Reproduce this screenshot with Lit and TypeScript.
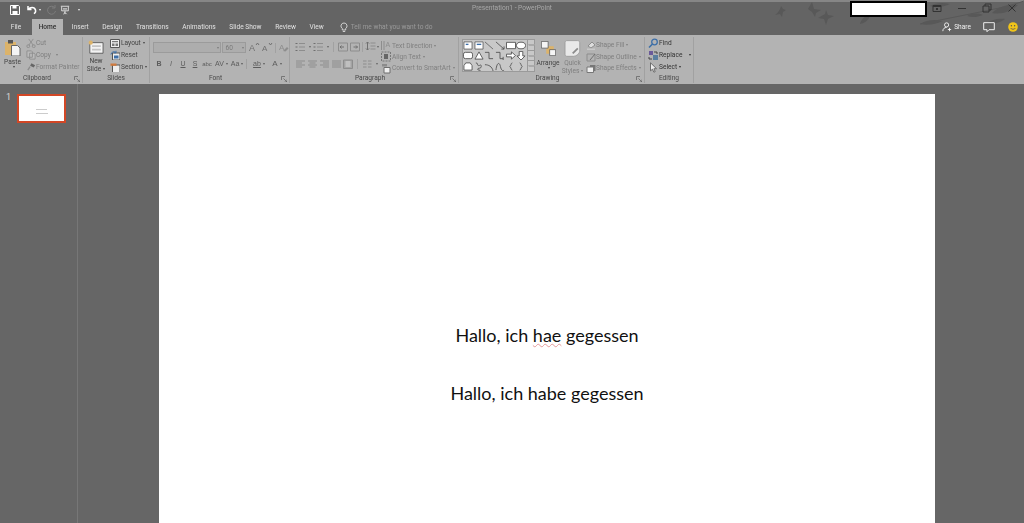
import { LitElement, html, css, svg } from 'lit';
import { customElement } from 'lit/decorators.js';

const MID = '#6f6f6f';
const PALE = '#8d8d8d';
const GOLD = '#dcb36a';
const BLUE = '#3d6fa8';

const icons: Record<string, unknown> = {
  save: svg`<path d="M1.5 1.5h8l1 1v8h-9z" fill="none" stroke="#fff"/><path d="M3.5 1.5h4v3h-4zM3.5 7h5v3.5h-5z" fill="#fff"/>`,
  undo: svg`<path d="M2 2v3.5h3.5M2.5 5.5C4 3 8.5 2.8 9.5 6c.4 1.6-.4 3-1.6 3.6" fill="none" stroke="#fff" stroke-width="1.5"/>`,
  redo: svg`<path d="M8.5 3.5a4 4 0 1 0 1 3.5M9 1v3H6" fill="none" stroke="#7d7d7d"/>`,
  present: svg`<path d="M1 1.5h10M2 2v5h8V2M6 7v4M4 11l2-2 2 2" fill="none" stroke="#eee"/><path d="M3.5 4h5v1.4h-5z" fill="#ddd"/>`,
  paste: svg`<path d="M1 3h11v13H1z" fill="${GOLD}"/><path d="M4 1h5v3.5H4z" fill="#555"/><path d="M7.5 6.5h6l2.5 2.5v8H7.5z" fill="#f4f4f4" stroke="#666"/>`,
  cut: svg`<path d="M3 1l5 7M8 1L3 8" stroke="${PALE}" fill="none"/><circle cx="2.5" cy="9" r="1.6" fill="none" stroke="${PALE}"/><circle cx="8.5" cy="9" r="1.6" fill="none" stroke="${PALE}"/>`,
  copy: svg`<path d="M1 1h5l1 1v6H1zM4 3.5h5l1 1V10H4z" fill="#bbb" stroke="${PALE}"/>`,
  painter: svg`<path d="M6 1.5l4 2-1.5 2.5-4-2z" fill="#666"/><path d="M4.5 5L2 9" stroke="${PALE}" stroke-width="1.5"/>`,
  newslide: svg`<path d="M2 3h15v12H2z" fill="#f3f3f3" stroke="#555"/><path d="M4.5 6h10v2h-10zM4.5 10h10v2h-10z" fill="#c4c4c4"/><circle cx="3" cy="3" r="2.4" fill="${GOLD}"/>`,
  layout: svg`<path d="M.5 1.5h9v8h-9z" fill="#eee" stroke="#555"/><path d="M2 3h6v1.3H2zM2 5.5h2.5V8H2zM5.5 5.5H8V8H5.5z" fill="#777"/>`,
  reset: svg`<path d="M2.5 3h7.5v7H2.5z" fill="#eee" stroke="#555"/><path d="M1 4.5a3 3 0 0 1 5-2M6 .8v2H4" fill="none" stroke="${BLUE}"/><path d="M4 5.5h4.5v3H4z" fill="${BLUE}"/>`,
  section: svg`<path d="M2.5 3h7.5v7.5H2.5z" fill="#eee" stroke="#555"/><path d="M.5 1.5h6v2.3h-6z" fill="#d07a3e"/>`,
  grow: svg`<text x="0" y="9" font-size="9" fill="${MID}" font-family="Liberation Sans">A</text><path d="M7 3l1.5-2L10 3" fill="none" stroke="${MID}"/>`,
  shrink: svg`<text x="0" y="9" font-size="8" fill="${MID}" font-family="Liberation Sans">A</text><path d="M7 1l1.5 2L10 1" fill="none" stroke="${MID}"/>`,
  clear: svg`<text x="1" y="8" font-size="8" fill="${PALE}" font-family="Liberation Sans">A</text><path d="M5 9l4-4 1.5 1.5-3 3z" fill="${PALE}"/>`,
  bullets: svg`<path d="M.5 1.500h2M.5 5h2M.5 8.500h2" stroke="${MID}"/><path d="M4 1.500h6M4 5h6M4 8.500h6" stroke="${PALE}"/>`,
  indentL: svg`<path d="M.5 1h9v8h-9z" fill="none" stroke="${PALE}"/><path d="M2 5h4M2 5l1.500-1.500M2 5l1.500 1.500" stroke="${MID}" fill="none"/>`,
  indentR: svg`<path d="M.5 1h9v8h-9z" fill="none" stroke="${PALE}"/><path d="M7.500 5h-4M7.500 5L6 3.500M7.500 5L6 6.500" stroke="${MID}" fill="none"/>`,
  spacing: svg`<path d="M2.500 1v8M1 2.500l1.500-1.500L4 2.500M1 7.500L2.500 9 4 7.500" stroke="${MID}" fill="none"/><path d="M5.500 2h5M5.500 5h5M5.500 8h5" stroke="${PALE}"/>`,
  align: svg`<path d="M1 2h9M1 4h6M1 6h9M1 8h6" stroke="${PALE}"/>`,
  alignC: svg`<path d="M1 2h9M2.500 4h6M1 6h9M2.500 8h6" stroke="${PALE}"/>`,
  alignR: svg`<path d="M1 2h9M4 4h6M1 6h9M4 8h6" stroke="${PALE}"/>`,
  justify: svg`<path d="M1 2h9M1 4h9M1 6h9M1 8h9" stroke="${PALE}"/>`,
  distrib: svg`<path d="M.5 1h9v8.500h-9z" fill="#a3a3a3" stroke="${PALE}"/><path d="M2.500 3h5M2.500 5h5M2.500 7h5" stroke="#ddd"/>`,
  cols: svg`<path d="M1 2h3.500M1 5h3.500M1 8h3.500M6 2h3.500M6 5h3.500M6 8h3.500" stroke="${PALE}"/>`,
  textdir: svg`<path d="M.5 1v9M3 1v9" stroke="${PALE}"/><text x="4.500" y="7" font-size="7" fill="${PALE}" font-family="Liberation Sans">A</text>`,
  aligntext: svg`<path d="M.5 1h9v9h-9z" fill="none" stroke="#777" stroke-dasharray="2 1"/><path d="M3 3h4v5H3z" fill="#666"/>`,
  smartart: svg`<path d="M1 1h5v2.500H1z" fill="#8c8c8c"/><path d="M3 4.500h6v5.500H3z" fill="#eee" stroke="${MID}"/>`,
  arrange: svg`<path d="M7 7h10v10H7z" fill="${GOLD}"/><path d="M.5.5h9v9h-9zM11.500 11.500h8v8h-8z" fill="#f5f5f5" stroke="#555"/>`,
  quick: svg`<path d="M3 .7h12.500c1.600 0 2.500 1 2.500 2.500v10c0 2.500-4 6-7 6H3c-1.400 0-2.300-1-2.300-2.500V3.200C.7 1.700 1.600.7 3 .7z" fill="#e9e9e9" stroke="#999"/><path d="M9 15l6-6 1.500 1.500-6 6z" fill="#8b8b8b"/>`,
  fill: svg`<path d="M2 6l4-4 3 3-4 3z" fill="#ddd" stroke="${PALE}"/><path d="M1 8.500h8v1.500H1z" fill="#c9c9c9"/>`,
  outline: svg`<path d="M1 2h8v7H1z" fill="none" stroke="${PALE}"/><path d="M4 8l5-6" stroke="${MID}"/>`,
  effects: svg`<path d="M4 2h5.500v6H4z" fill="#777"/><path d="M1 4h6.500v5.500H1z" fill="#eee" stroke="#777"/>`,
  find: svg`<circle cx="6.500" cy="4" r="2.800" fill="none" stroke="${BLUE}" stroke-width="1.300"/><path d="M4.500 6L1 9.500" stroke="${BLUE}" stroke-width="1.600"/>`,
  replace: svg`<path d="M1 1h4v4H1z" fill="#6a5a9a"/><path d="M5 5h5v5H5z" fill="#5b7f9f"/><path d="M6 2h3v2" stroke="#444" fill="none"/><path d="M1 7v2h3" stroke="#444" fill="none"/>`,
  select: svg`<path d="M2.500 .8v8l2-1.600 1.400 3 1.300-.6-1.300-2.900h2.600z" fill="#eee" stroke="#555" stroke-width=".8"/>`,
  bulb: svg`<path d="M5 1a3 3 0 0 0-1.700 5.500V8h3.400V6.500A3 3 0 0 0 5 1zM3.800 9.500h2.400" fill="none" stroke="#d0d0d0"/>`,
  person: svg`<circle cx="5.500" cy="3.500" r="2.500" fill="none" stroke="#fff"/><path d="M1 11c0-3 2-4.500 4.500-4.500M7 9h4M9 7v4" fill="none" stroke="#fff"/>`,
  comment: svg`<path d="M.7.700h10.600v7H6l-2 2v-2H.7z" fill="none" stroke="#eee"/>`,
  smile: svg`<circle cx="5" cy="5" r="4.800" fill="#f0c419"/><circle cx="3.400" cy="3.800" r=".7" fill="#555"/><circle cx="6.600" cy="3.800" r=".7" fill="#555"/><path d="M2.600 6c.7 1.700 4.100 1.700 4.800 0" fill="none" stroke="#555" stroke-width=".8"/>`,
  restoreUp: svg`<path d="M1 2.500h8v6H1z" fill="none" stroke="#333"/><path d="M1 2.500h8v1.500H1zM4 5h2v2H4z" fill="#333"/>`,
  min: svg`<path d="M1 5.500h8" stroke="#333"/>`,
  max: svg`<path d="M1 3h6v6H1zM3 3V1h6v6H7" fill="none" stroke="#333"/>`,
  close: svg`<path d="M1.500 1.500l7 7M8.500 1.500l-7 7" stroke="#333"/>`,
  launcher: svg`<path d="M.5 4V.5H4M2.500 2.500L6 6M6 3.500V6H3.500" fill="none" stroke="#666" stroke-width=".8"/>`,
};

// vw/vh: the size the paths were drawn at, when the icon is shown scaled
const ic = (name: string, w = 11, h = w, vw = w, vh = h) =>
  html`<svg class="ic" width=${w} height=${h} viewBox="0 0 ${vw} ${vh}">${icons[name]}</svg>`;

const caret = html`<span class="caret"></span>`;
const launcher = html`<svg class="launch" width="6" height="6">${icons.launcher}</svg>`;

const shapes = [
  svg`<path d="M1 1h9v8H1z" fill="#fff" stroke="#666"/><path d="M3 3h3v1.500H3z" fill="${BLUE}"/>`,
  svg`<path d="M1 1h9v8H1z" fill="#fff" stroke="#666"/><path d="M3 3h5v1.500H3z" fill="${BLUE}"/>`,
  svg`<path d="M1 1l9 8" stroke="#666"/>`,
  svg`<path d="M1 1l9 8M10 9V6M10 9H7" stroke="#555" fill="none"/>`,
  svg`<path d="M.5 1.500h10v7H.5z" fill="#fff" stroke="#555"/>`,
  svg`<ellipse cx="5.500" cy="5" rx="5" ry="3.700" fill="#fff" stroke="#555"/>`,
  svg`<rect x=".5" y="1.500" width="10" height="7" rx="2" fill="#fff" stroke="#555"/>`,
  svg`<path d="M5.500 1l4.500 8H1z" fill="#fff" stroke="#555"/>`,
  svg`<path d="M1 1.500h4.500v7H10" fill="none" stroke="#555"/>`,
  svg`<path d="M1 1.500h4.500v7H9M9 6.500v4" fill="none" stroke="#555"/>`,
  svg`<path d="M.5 3.500h5.500V1l4.500 4-4.500 4V6.500H.5z" fill="#fff" stroke="#555"/>`,
  svg`<path d="M3.500.5h4v5H10L5.500 10 1 5.500h2.500z" fill="#fff" stroke="#555"/>`,
  svg`<path d="M1 9V4l2-3h5l2 3v5z" fill="#fff" stroke="#555"/>`,
  svg`<path d="M2 1c3 0 1 3 3 3s3-2 3 1-4 1-4 3 3 0 3 2" fill="none" stroke="#555"/>`,
  svg`<path d="M1 3c4 0 8 2 9 7" fill="none" stroke="#555"/>`,
  svg`<path d="M1 9c1-9 4-9 5-4s3 5 4 4" fill="none" stroke="#555"/>`,
  svg`<path d="M7 1C5 1 6 4.500 4 5c2 .5 1 4 3 4" fill="none" stroke="#555"/>`,
  svg`<path d="M4 1c2 0 1 3.500 3 4-2 .5-1 4-3 4" fill="none" stroke="#555"/>`,
];

@customElement('app-root')
export class AppRoot extends LitElement {
  static styles = css`
    :host {
      display: block;
      width: 1024px;
      height: 523px;
      overflow: hidden;
      background: #666;
      font-family: Roboto, 'Open Sans', sans-serif;
      font-size: 6.600px;
      color: #444;
    }
    .ic { display: block; flex: none; }
    .caret {
      display: inline-block;
      flex: none;
      width: 0;
      height: 0;
      margin-left: 2px;
      vertical-align: middle;
      border-left: 1.500px solid transparent;
      border-right: 1.500px solid transparent;
      border-top: 2px solid currentColor;
    }
    .top {
      position: relative;
      height: 35px;
      box-sizing: border-box;
      background: #646464;
      border-top: 2px solid #868686;
    }
    .leaves { position: absolute; left: 770px; top: -2px; filter: blur(0.5px); }
    .redact {
      position: absolute;
      left: 850px;
      top: -1px;
      width: 77px;
      height: 16px;
      box-sizing: border-box;
      background: #fff;
      border: 2px solid #000;
    }
    .qat {
      position: relative;
      display: flex;
      align-items: center;
      height: 15px;
      padding-left: 9px;
      color: #eee;
      filter: blur(0.3px);
    }
    .qat .undo { margin-left: 6px; }
    .qat .redo { margin-left: 5px; }
    .qat .present { margin-left: 3px; }
    .qat .more { margin-left: 8px; }
    .title {
      position: absolute;
      left: 0;
      right: 0;
      top: 0;
      line-height: 13px;
      text-align: center;
      color: #a8a8a8;
    }
    .win {
      position: absolute;
      right: 7px;
      top: 1px;
      display: flex;
      gap: 15px;
      filter: blur(0.3px);
    }
    .tabs {
      position: relative;
      display: flex;
      align-items: stretch;
      height: 16px;
      margin-top: 2px;
      color: #e2e2e2;
      filter: blur(0.3px);
    }
    .tab { line-height: 16px; padding: 0 6.800px; white-space: nowrap; }
    .tab.file { width: 32px; padding: 0; box-sizing: border-box; text-align: center; }
    .tab.on { width: 31px; padding: 0; margin-right: 2px; text-align: center; background: #b3b3b3; color: #333; font-weight: 500; }
    .tell {
      display: flex;
      align-items: center;
      gap: 2px;
      margin-left: 8px;
      color: #9a9a9a;
    }
    .share {
      position: absolute;
      right: 6px;
      top: 0;
      height: 16px;
      display: flex;
      align-items: center;
      color: #f0f0f0;
    }
    .share .label { margin: 0 12px 0 2px; }
    .share .cm { margin-right: 13px; }

    .ribbon {
      display: flex;
      height: 49px;
      background: #b3b3b3;
    }
    .group {
      position: relative;
      flex: none;
      box-sizing: border-box;
      display: flex;
      flex-direction: column;
      margin: 2px 0 1px;
      border-right: 1px solid #a1a1a1;
      filter: blur(0.3px);
    }
    .clip { width: 83px; }
    .slides { width: 67px; }
    .font { width: 140px; }
    .para { width: 169px; }
    .draw { width: 186px; }
    .edit { width: 49px; }
    .body { display: flex; flex: 1; min-height: 0; }
    .gl {
      height: 9px;
      line-height: 9px;
      text-align: center;
      color: #474747;
    }
    .gl.pad { padding-right: 8px; }
    .launch { position: absolute; right: 2px; bottom: 1px; }
    .big {
      display: flex;
      flex-direction: column;
      align-items: center;
      line-height: 8px;
      text-align: center;
      flex: none;
    }
    .col { display: flex; flex-direction: column; }
    .row {
      display: flex;
      align-items: center;
      height: 12px;
      white-space: nowrap;
    }
    .off { color: #7f7f7f; }

    .clip .big { width: 25px; padding-top: 2px; }
    .clip .big .ic { margin-bottom: 2px; }
    .clip .col { margin-left: 1px; }
    .slides .big { width: 26px; padding-top: 3px; }
    .slides .big .ic { margin-bottom: 2px; }
    .slides .col { margin-left: 1px; }
    .slides .row .ic { margin-right: 1px; }

    .font .body { flex-direction: column; padding: 4px 0 0 3px; }
    .fr { display: flex; align-items: center; height: 13px; }
    .combo {
      box-sizing: border-box;
      height: 11px;
      background: #adadad;
      border: 1px solid #9b9b9b;
      display: flex;
      justify-content: space-between;
      align-items: center;
      color: #7b7b7b;
      padding: 0 1px 0 2px;
    }
    .combo.name { width: 70px; margin-right: 1px; }
    .combo.size { width: 24px; margin-right: 3px; }
    .fr2 { margin-top: 3px; color: #5c5c5c; font-family: 'Liberation Sans', sans-serif; font-size: 7px; }
    .c { display: block; width: 12px; text-align: center; flex: none; }
    .c.wb { font-weight: 700; }
    .c.it { font-style: italic; }
    .c.ul { text-decoration: underline; }
    .c.sm { font-size: 6px; }
    .c.av { width: 17px; }
    .c.aa { width: 14px; }
    .c.hl { width: 20px; }
    .c.fc { width: 16px; font-size: 8px; }
    .under { text-decoration: underline; }
    .sep { width: 1px; height: 10px; background: #a1a1a1; margin: 0 2px; flex: none; }
    .sep.bare { margin: 0; }
    .gap2 { width: 2px; flex: none; }

    .para .body { padding: 3px 0 0 5px; }
    .para .left { width: 86px; flex: none; }
    .para .fr { gap: 2px; color: #666; }
    .para .fr + .fr { margin-top: 4px; }
    .para .spc .caret { margin-left: -1px; }

    .draw .body { padding: 2px 0 0 3px; }
    .gallery {
      display: flex;
      flex: none;
      height: 33px;
      width: 73px;
      box-sizing: border-box;
      background: #c8c8c8;
      border: 1px solid #9a9a9a;
    }
    .cells {
      display: grid;
      grid-template-columns: repeat(6, 10.600px);
      grid-auto-rows: 10.500px;
      flex: 1;
      align-items: center;
      justify-items: center;
    }
    .sb { display: flex; flex-direction: column; width: 7px; flex: none; border-left: 1px solid #9a9a9a; }
    .sb span {
      flex: 1;
      display: flex;
      align-items: center;
      justify-content: center;
      color: #333;
      border-bottom: 1px solid #9a9a9a;
    }
    .sb span:last-child { border-bottom: 0; }
    .sb span:first-child { color: #aaa; }
    .sb .caret { margin: 0; }
    .arr { width: 26px; padding-top: 2px; }
    .arr .ic { margin-bottom: 3px; }
    .qs { width: 23px; padding-top: 1px; }
    .qs .ic { margin-bottom: 2px; }
    .draw .col { margin-left: 2px; }

    .edit .col { padding-left: 3px; color: #333; }
    .ml { margin-left: 5px; }

    .work { display: flex; height: 439px; }
    .pane {
      flex: none;
      display: flex;
      width: 77px;
      box-sizing: border-box;
      padding: 10px 0 0 6px;
      color: #d8d8d8;
    }
    .num { width: 11px; font-size: 9px; line-height: 7px; }
    .thumb {
      width: 49px;
      height: 29px;
      box-sizing: border-box;
      background: #fff;
      border: 2px solid #d24726;
      display: flex;
      flex-direction: column;
      align-items: center;
      justify-content: flex-end;
      gap: 3px;
      padding-bottom: 7px;
    }
    .thumb i { display: block; height: 1px; background: #ccc; }
    .thumb i:first-child { width: 11px; }
    .thumb i:last-child { width: 12px; }
    .divider { flex: none; width: 1px; background: #777; }
    .stage {
      flex: 1;
      display: flex;
      justify-content: center;
      padding-top: 10px;
      margin-right: 8px;
    }
    .slide {
      width: 776px;
      height: 429px;
      background: #fff;
      text-align: center;
      box-sizing: border-box;
      padding-top: 228px;
      color: #111;
      font-family: Lato, 'Open Sans', sans-serif;
      font-size: 18px;
      line-height: 26px;
    }
    .slide p { margin: 0 0 32px; }
    .typo { text-decoration: underline wavy #e39a9a 0.6px; text-underline-offset: 1px; }
  `;

  render() {
    return html`
      <div class="top">
        <svg class="leaves" width="254" height="35" viewBox="0 0 254 35">
          <g fill="#585858">
            <path d="M5 15c3-2 5-5 6-9l2 3 3 1-3 2-1 5-2-3z" />
            <path d="M38 9l4-7 2 7 7 1-5 3-1 4-3-5z" />
            <path d="M48 18l7-4 1-4 2 5 6 1-6 3-2 6-2-6z" />
            <path d="M90 24c1-5 5-8 10-9-1 5-5 8-10 9z" />
            <path d="M150 24c6-4 14-5 23-3-7 3-15 5-23 3z" />
            <path d="M160 6c5-3 13-4 20-2-6 3-14 4-20 2z" />
            <path d="M197 16c5-3 11-3 16-1-5 2-11 3-16 1z" />
            <path d="M222 13c6-6 15-9 26-8-6 6-16 10-26 8z" />
            <path d="M215 24c5-4 13-6 20-5-5 4-13 6-20 5z" />
          </g>
          <path d="M150 24c20-4 40-8 60-12s30-6 44-11" fill="none" stroke="#585858" />
        </svg>
        <div class="qat">
          <div class="title">Presentation1 - PowerPoint</div>
          ${ic('save')}
          <span class="undo">${ic('undo')}</span>
          <span class="caret"></span>
          <span class="redo">${ic('redo')}</span>
          <span class="present">${ic('present', 10, 10, 12, 12)}</span>
          <span class="caret more"></span>
        </div>
        <div class="redact"></div>
        <div class="win">
          ${ic('restoreUp', 10)}${ic('min', 10)}${ic('max', 10)}${ic('close', 10)}
        </div>
        <div class="tabs">
          <div class="tab file">File</div>
          <div class="tab on">Home</div>
          ${['Insert', 'Design', 'Transitions', 'Animations', 'Slide Show', 'Review', 'View'].map(
            (t) => html`<div class="tab">${t}</div>`
          )}
          <div class="tell">${ic('bulb', 10)}<span>Tell me what you want to do</span></div>
          <div class="share">
            ${ic('person', 10, 10, 12, 12)}<span class="label">Share</span>
            <span class="cm">${ic('comment', 12, 11)}</span>
            ${ic('smile', 10)}
          </div>
        </div>
      </div>

      <div class="ribbon">
        <div class="group clip">
          <div class="body">
            <div class="big">
              ${ic('paste', 17, 17)}
              <span>Paste</span>${caret}
            </div>
            <div class="col">
              <div class="row off">${ic('cut', 10, 10, 11, 11)}Cut</div>
              <div class="row off">${ic('copy', 10, 10, 11, 11)}Copy&nbsp;&nbsp;${caret}</div>
              <div class="row off">${ic('painter', 10, 10, 11, 11)}Format Painter</div>
            </div>
          </div>
          <div class="gl pad">Clipboard</div>
          ${launcher}
        </div>

        <div class="group slides">
          <div class="body">
            <div class="big">
              ${ic('newslide', 18, 15, 18, 17)}
              <span>New</span><span>Slide${caret}</span>
            </div>
            <div class="col">
              <div class="row">${ic('layout', 10)}Layout${caret}</div>
              <div class="row">${ic('reset', 10)}Reset</div>
              <div class="row">${ic('section', 10)}Section${caret}</div>
            </div>
          </div>
          <div class="gl">Slides</div>
        </div>

        <div class="group font">
          <div class="body">
            <div class="fr">
              <div class="combo name"><span></span>${caret}</div>
              <div class="combo size"><span>60</span>${caret}</div>
              ${ic('grow', 11)}<span class="gap2"></span>${ic('shrink', 11)}
              <span class="sep"></span>${ic('clear', 11)}
            </div>
            <div class="fr fr2">
              <b class="c wb">B</b><span class="c it">I</span><span class="c ul">U</span><span class="c ul">S</span>
              <span class="c sm">abc</span>
              <span class="c av">AV${caret}</span><span class="c aa">Aa${caret}</span>
              <span class="sep"></span>
              <span class="c hl"><span class="under">ab</span>${caret}</span>
              <span class="c fc">A${caret}</span>
            </div>
          </div>
          <div class="gl pad">Font</div>
          ${launcher}
        </div>

        <div class="group para">
          <div class="body">
            <div class="left">
              <div class="fr">
                ${ic('bullets', 10)}${caret}${ic('bullets', 10)}${caret}
                <span class="sep"></span>${ic('indentL', 10)}${ic('indentR', 10)}
                <span class="sep bare"></span><span class="fr spc">${ic('spacing', 11)}${caret}</span>
              </div>
              <div class="fr">
                ${ic('align', 10)}${ic('alignC', 10)}${ic('alignR', 10)}${ic('justify', 10)}${ic('distrib', 10)}
                <span class="sep"></span>${ic('cols', 10)}${caret}
              </div>
            </div>
            <div class="col off">
              <div class="row">${ic('textdir', 11)}Text Direction${caret}</div>
              <div class="row">${ic('aligntext', 11)}Align Text${caret}</div>
              <div class="row">${ic('smartart', 11)}Convert to SmartArt${caret}</div>
            </div>
          </div>
          <div class="gl pad">Paragraph</div>
          ${launcher}
        </div>

        <div class="group draw">
          <div class="body">
            <div class="gallery">
              <div class="cells">
                ${shapes.map((s) => html`<svg class="ic" width="10" height="9" viewBox="0 0 11 10">${s}</svg>`)}
              </div>
              <div class="sb"><span>${caret}</span><span>${caret}</span><span>${caret}</span></div>
            </div>
            <div class="big arr">
              ${ic('arrange', 15, 15, 20, 20)}
              <span>Arrange</span>${caret}
            </div>
            <div class="big qs off">
              ${ic('quick', 17, 17, 19, 20)}
              <span>Quick</span><span>Styles${caret}</span>
            </div>
            <div class="col off">
              <div class="row">${ic('fill', 10)}Shape Fill${caret}</div>
              <div class="row">${ic('outline', 10)}Shape Outline${caret}</div>
              <div class="row">${ic('effects', 10)}Shape Effects${caret}</div>
            </div>
          </div>
          <div class="gl pad">Drawing</div>
          ${launcher}
        </div>

        <div class="group edit">
          <div class="body">
            <div class="col">
              <div class="row">${ic('find', 11)}Find</div>
              <div class="row">${ic('replace', 11)}Replace<span class="ml">${caret}</span></div>
              <div class="row">${ic('select', 11)}Select${caret}</div>
            </div>
          </div>
          <div class="gl">Editing</div>
        </div>
      </div>

      <div class="work">
        <div class="pane">
          <div class="num">1</div>
          <div class="thumb"><i></i><i></i></div>
        </div>
        <div class="divider"></div>
        <div class="stage">
          <div class="slide">
            <p>Hallo, ich <span class="typo">hae</span> gegessen</p>
            <p>Hallo, ich habe gegessen</p>
          </div>
        </div>
      </div>
    `;
  }
}
